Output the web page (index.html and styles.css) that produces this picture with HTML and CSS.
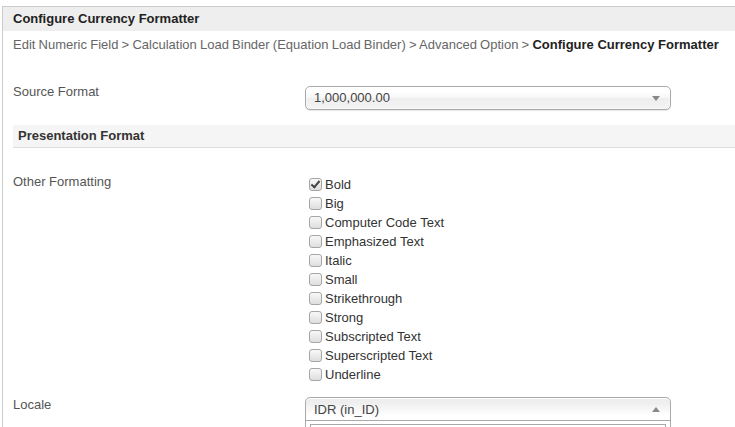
FILE: index.html
```html
<!DOCTYPE html>
<html>
<head>
<meta charset="utf-8">
<link rel="stylesheet" href="styles.css">
</head>
<body>
<div class="panel">
  <div class="title">Configure Currency Formatter</div>
  <div class="crumbs"><span class="trail">Edit Numeric Field &gt; Calculation Load Binder (Equation Load Binder) &gt; Advanced Option &gt; </span><b>Configure Currency Formatter</b></div>

  <div class="row row-source">
    <div class="label">Source Format</div>
    <div class="select">
      <span class="select-text">1,000,000.00</span>
      <span class="arrow down"></span>
    </div>
  </div>

  <div class="section">Presentation Format</div>

  <div class="row row-other">
    <div class="label">Other Formatting</div>
    <ul class="checks">
      <li><span class="cb checked"></span>Bold</li>
      <li><span class="cb"></span>Big</li>
      <li><span class="cb"></span>Computer Code Text</li>
      <li><span class="cb"></span>Emphasized Text</li>
      <li><span class="cb"></span>Italic</li>
      <li><span class="cb"></span>Small</li>
      <li><span class="cb"></span>Strikethrough</li>
      <li><span class="cb"></span>Strong</li>
      <li><span class="cb"></span>Subscripted Text</li>
      <li><span class="cb"></span>Superscripted Text</li>
      <li><span class="cb"></span>Underline</li>
    </ul>
  </div>

  <div class="row row-locale">
    <div class="label">Locale</div>
    <div class="chosen open">
      <div class="select">
        <span class="select-text">IDR (in_ID)</span>
        <span class="arrow up"></span>
      </div>
      <div class="drop">
        <div class="search"></div>
      </div>
    </div>
  </div>
</div>
</body>
</html>
```
FILE: styles.css
```css
html, body {
  margin: 0;
  padding: 0;
  background: #fff;
  overflow: hidden;
}
body {
  font-family: "Liberation Sans", Arial, sans-serif;
  font-size: 13px;
  color: #555;
}
.panel {
  margin: 6px 0 0 2px;
  border-top: 1px solid #ccc;
  border-left: 1px solid #ccc;
}
.title {
  height: 24px;
  line-height: 24px;
  background: #eeeeee;
  padding-left: 10px;
  color: #222;
  font-weight: bold;
}
.crumbs {
  padding: 6px 0 0 10px;
  line-height: 16px;
  color: #666;
  white-space: nowrap;
}
.trail {
  word-spacing: -0.4px;
}
.crumbs b {
  color: #222;
}
.row {
  display: flex;
  align-items: flex-start;
  padding-left: 10px;
}
.label {
  width: 292px;
  flex: none;
  line-height: 16px;
}
.row-source {
  margin-top: 31px;
}
.row-source .select {
  margin-top: 2px;
}
.select {
  position: relative;
  box-sizing: border-box;
  width: 366px;
  height: 24px;
  border: 1px solid #aaa;
  border-radius: 5px;
  background: linear-gradient(#fff 20%, #f6f6f6 50%, #eee 52%, #f4f4f4 100%);
  box-shadow: 0 0 3px #fff inset, 0 1px 1px rgba(0,0,0,0.1);
  color: #444;
  line-height: 22px;
  padding-left: 8px;
}
.arrow {
  position: absolute;
  right: 10px;
  top: 9px;
  width: 0;
  height: 0;
  border-left: 4px solid transparent;
  border-right: 4px solid transparent;
}
.arrow.down {
  border-top: 5px solid #888;
}
.arrow.up {
  border-bottom: 5px solid #888;
}
.section {
  margin: 15px 0 0 10px;
  height: 22px;
  line-height: 22px;
  background: #f5f5f5;
  border-bottom: 1px solid #ddd;
  padding-left: 5px;
  font-weight: bold;
  color: #333;
}
.row-other {
  margin-top: 26px;
}
.checks {
  list-style: none;
  margin: 1px 0 0 0;
  padding: 0 0 0 4px;
}
.checks li {
  display: flex;
  align-items: center;
  height: 19px;
  color: #333;
}
.cb {
  position: relative;
  box-sizing: border-box;
  width: 13px;
  height: 13px;
  margin-right: 3px;
  border: 1px solid #a6a6a6;
  border-radius: 3px;
  background: linear-gradient(#f8f8f8, #dedede);
  flex: none;
}
.cb.checked::after {
  content: "";
  position: absolute;
  left: 3px;
  top: 0px;
  width: 3px;
  height: 7px;
  border-right: 2px solid #444;
  border-bottom: 2px solid #444;
  transform: rotate(40deg);
}
.row-locale {
  margin-top: 13px;
}
.chosen {
  width: 366px;
}
.chosen.open .select {
  border-bottom-left-radius: 0;
  border-bottom-right-radius: 0;
  background: linear-gradient(#eee 20%, #fff 80%);
  box-shadow: 0 1px 0 #fff inset;
  line-height: 24px;
}
.drop {
  box-sizing: border-box;
  margin-top: -1px;
  border: 1px solid #aaa;
  border-top: 0;
  border-bottom: 0;
  padding: 3px 4px 0;
  background: #fff;
  height: 7px;
  overflow: hidden;
}
.search {
  margin-top: 1px;
  height: 24px;
  border: 1px solid #aaa;
}
```
